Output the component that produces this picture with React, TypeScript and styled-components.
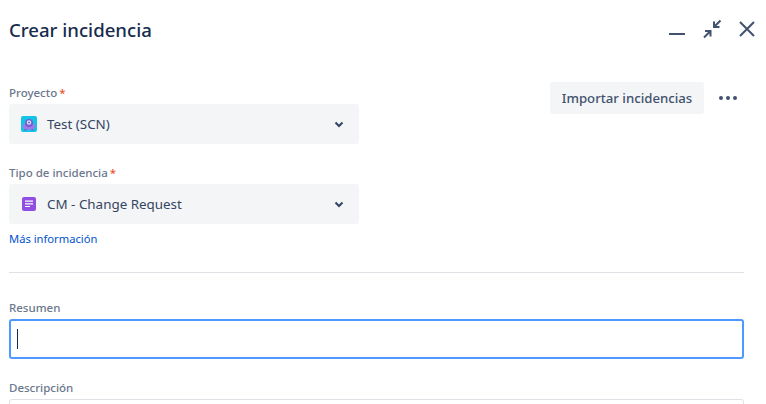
import React from "react";
import styled, { createGlobalStyle } from "styled-components";

const Global = createGlobalStyle`
  html, body { margin: 0; padding: 0; background: #fff; height: 404px; overflow: hidden; }
  body { font-family: "Noto Sans", "Open Sans", sans-serif; color: #172b4d; }
`;

const Dialog = styled.div`
  width: 766px;
  height: 404px;
  overflow: hidden;
  padding: 0 22px 0 9px;
  box-sizing: border-box;
  display: flex;
  flex-direction: column;
  & > * { flex-shrink: 0; }
`;

const Header = styled.header`
  height: 60px;
  display: flex;
  align-items: center;
  justify-content: space-between;
`;

const Title = styled.h1`
  margin: 0;
  font-size: 18.6px;
  font-weight: 500;
  line-height: 24px;
  color: #172b4d;
`;

const HeaderActions = styled.div`
  display: flex;
  align-items: center;
  gap: 11px;
  margin-right: -15px;
`;

const IconButton = styled.button`
  width: 24px;
  height: 24px;
  padding: 0;
  border: 0;
  background: none;
  display: flex;
  align-items: center;
  justify-content: center;
  color: #42526e;
`;

const TopSection = styled.section`
  display: flex;
  justify-content: space-between;
  align-items: flex-start;
  padding-top: 24px;
`;

const Fields = styled.div`
  width: 350px;
  display: flex;
  flex-direction: column;
`;

const Field = styled.div<{ $gap?: number }>`
  display: flex;
  flex-direction: column;
  margin-top: ${(p) => p.$gap ?? 0}px;
`;

const Label = styled.label`
  font-size: 11.5px;
  font-weight: 500;
  line-height: 18px;
  height: 16px;
  margin-bottom: 4px;
  color: #6b778c;
`;

const Req = styled.span`
  color: #e5532d;
  margin-left: 2px;
`;

const Select = styled.div`
  height: 40px;
  background: #f4f5f7;
  border-radius: 3px;
  display: flex;
  align-items: center;
  padding: 0 12px;
  box-sizing: border-box;
  font-size: 13.4px;
  color: #344563;
`;

const SelectIcon = styled.span`
  width: 16px;
  height: 16px;
  margin-right: 10px;
  flex: none;
  display: flex;
`;

const SelectText = styled.span`
  flex: 1;
  padding-bottom: 1px;
`;

const InfoLink = styled.a`
  font-size: 11.2px;
  line-height: 16px;
  margin-top: 7px;
  color: #0052cc;
`;

const Tools = styled.div`
  display: flex;
  align-items: center;
  gap: 12px;
  margin-top: -2px;
  margin-right: 4px;
`;

const ImportButton = styled.button`
  height: 32px;
  width: 154px;
  padding: 0;
  border: 0;
  border-radius: 3px;
  background: #f4f5f7;
  font: 500 13.2px/32px "Noto Sans", "Open Sans", sans-serif;
  color: #42526e;
`;

const MoreButton = styled.button`
  width: 24px;
  height: 24px;
  padding: 0;
  border: 0;
  background: none;
  display: flex;
  align-items: center;
  justify-content: center;
  color: #42526e;
`;

const Divider = styled.hr`
  margin: 25px 0 26px;
  border: 0;
  height: 1px;
  background: #dfe1e6;
`;

const SummaryInput = styled.div`
  height: 40px;
  box-sizing: border-box;
  border: 2px solid #4c9aff;
  border-radius: 3px;
  background: #fff;
  display: flex;
  align-items: center;
  padding-left: 6px;
`;

const Caret = styled.span`
  width: 1px;
  height: 20px;
  background: #172b4d;
`;

const DescriptionBox = styled.div`
  height: 80px;
  box-sizing: border-box;
  border: 1px solid #dfe1e6;
  border-radius: 3px;
`;

export default function App() {
  return (
    <>
      <Global />
      <Dialog>
        <Header>
          <Title>Crear incidencia</Title>
          <HeaderActions>
            <IconButton aria-label="Minimizar">
              <svg width="24" height="24" viewBox="0 0 24 24">
                <rect x="4" y="15" width="16" height="2" fill="currentColor" />
              </svg>
            </IconButton>
            <IconButton aria-label="Contraer">
              <svg width="24" height="24" viewBox="0 0 24 24" fill="none" stroke="currentColor" strokeWidth="2">
                <path d="M20.5 2.5 14.5 8.5M14 3.5V9h5.5" />
                <path d="M4 19.5 10 13.5M5 13h5.5v5.5" />
              </svg>
            </IconButton>
            <IconButton aria-label="Cerrar">
              <svg width="24" height="24" viewBox="0 0 24 24" fill="none" stroke="currentColor" strokeWidth="2">
                <path d="M5 4 19 18M19 4 5 18" />
              </svg>
            </IconButton>
          </HeaderActions>
        </Header>
        <TopSection>
          <Fields>
            <Field>
              <Label>Proyecto<Req>*</Req></Label>
              <Select>
                <SelectIcon>
                  <svg width="16" height="16" viewBox="0 0 16 16">
                    <rect width="16" height="16" rx="2" fill="#14c4e6" />
                    <ellipse cx="8" cy="10.5" rx="6.5" ry="3.2" fill="#a07ae6" />
                    <circle cx="8" cy="7" r="4" fill="#7a5ad0" />
                    <circle cx="8" cy="6.5" r="2.2" fill="#d8e8fa" />
                    <circle cx="8" cy="6.5" r="1" fill="#7a5ad0" />
                    <rect x="3.5" y="13" width="2" height="1.5" fill="#7a5ad0" />
                    <rect x="10.5" y="13" width="2" height="1.5" fill="#7a5ad0" />
                  </svg>
                </SelectIcon>
                <SelectText>Test (SCN)</SelectText>
                <svg width="16" height="16" viewBox="0 0 16 16" fill="none" stroke="#344563" strokeWidth="2">
                  <path d="M4.5 6.5 8 10l3.5-3.5" />
                </svg>
              </Select>
            </Field>
            <Field $gap={20}>
              <Label>Tipo de incidencia<Req>*</Req></Label>
              <Select>
                <SelectIcon>
                  <svg width="16" height="16" viewBox="0 0 16 16">
                    <rect x="1" y="1" width="14" height="14" rx="2" fill="#904ee2" />
                    <path d="M4 4.5h8v1.2H4zM4 7.2h8v1.2H4zM4 9.9h5v1.2H4z" fill="#fff" />
                  </svg>
                </SelectIcon>
                <SelectText>CM - Change Request</SelectText>
                <svg width="16" height="16" viewBox="0 0 16 16" fill="none" stroke="#344563" strokeWidth="2">
                  <path d="M4.5 6.5 8 10l3.5-3.5" />
                </svg>
              </Select>
              <InfoLink>Más información</InfoLink>
            </Field>
          </Fields>
          <Tools>
            <ImportButton>Importar incidencias</ImportButton>
            <MoreButton aria-label="Más">
              <svg width="24" height="24" viewBox="0 0 24 24" fill="currentColor">
                <circle cx="5" cy="12" r="2" />
                <circle cx="12" cy="12" r="2" />
                <circle cx="19" cy="12" r="2" />
              </svg>
            </MoreButton>
          </Tools>
        </TopSection>
        <Divider />
        <Field>
          <Label>Resumen</Label>
          <SummaryInput><Caret /></SummaryInput>
        </Field>
        <Field $gap={20}>
          <Label>Descripción</Label>
          <DescriptionBox />
        </Field>
      </Dialog>
    </>
  );
}
